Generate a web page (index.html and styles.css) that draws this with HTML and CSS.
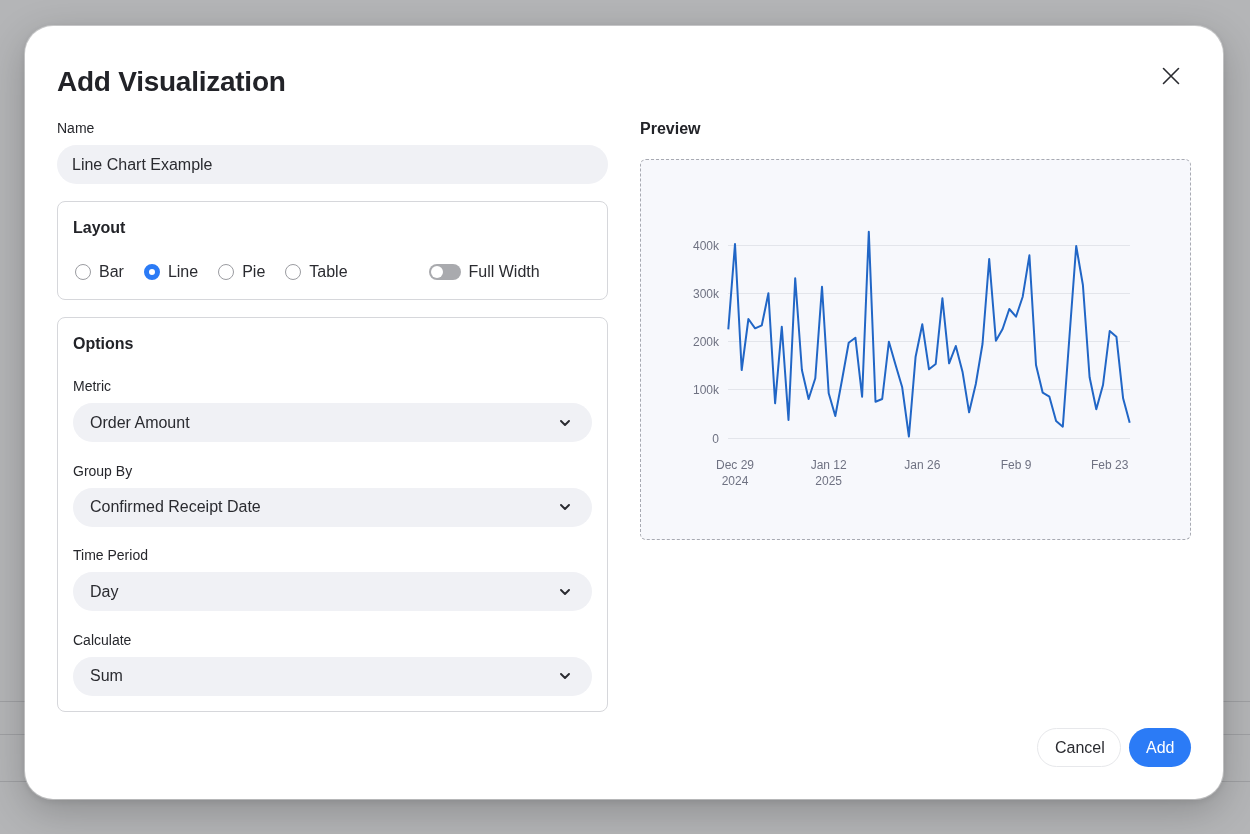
FILE: index.html
```html
<!DOCTYPE html>
<html lang="en">
<head>
<meta charset="utf-8">
<title>Add Visualization</title>
<link rel="stylesheet" href="styles.css">
</head>
<body>
<div class="page">
  <div class="page-row"></div>
  <div class="page-row"></div>
  <div class="page-row"></div>
</div>
<div class="backdrop">
  <div class="modal">
    <div class="modal-header">
      <h1 class="modal-title">Add Visualization</h1>
      <button class="close-btn" aria-label="Close">
        <svg width="18" height="18" viewBox="0 0 18 18"><path d="M1.5 1.5 L16.5 16.5 M16.5 1.5 L1.5 16.5" stroke="#2a2b30" stroke-width="1.6" fill="none" stroke-linecap="round"/></svg>
      </button>
    </div>
    <div class="modal-body">
      <div class="col">
        <label class="field-label">Name</label>
        <div class="text-input">Line Chart Example</div>

        <div class="panel layout-panel">
          <div class="panel-title">Layout</div>
          <div class="radio-row">
            <div class="radio-item"><span class="radio"></span><span>Bar</span></div>
            <div class="radio-item"><span class="radio checked"></span><span>Line</span></div>
            <div class="radio-item"><span class="radio"></span><span>Pie</span></div>
            <div class="radio-item"><span class="radio"></span><span>Table</span></div>
            <div class="radio-item toggle-item"><span class="toggle"><span class="knob"></span></span><span>Full Width</span></div>
          </div>
        </div>

        <div class="panel options-panel">
          <div class="panel-title">Options</div>
          <div class="fields">
            <div class="field">
              <label class="field-label">Metric</label>
              <div class="select"><span>Order Amount</span><svg class="chev" width="10" height="6" viewBox="0 0 10 6"><path d="M1 1 L5 5 L9 1" stroke="#2a2b30" stroke-width="1.9" fill="none" stroke-linecap="round" stroke-linejoin="round"/></svg></div>
            </div>
            <div class="field">
              <label class="field-label">Group By</label>
              <div class="select"><span>Confirmed Receipt Date</span><svg class="chev" width="10" height="6" viewBox="0 0 10 6"><path d="M1 1 L5 5 L9 1" stroke="#2a2b30" stroke-width="1.9" fill="none" stroke-linecap="round" stroke-linejoin="round"/></svg></div>
            </div>
            <div class="field">
              <label class="field-label">Time Period</label>
              <div class="select"><span>Day</span><svg class="chev" width="10" height="6" viewBox="0 0 10 6"><path d="M1 1 L5 5 L9 1" stroke="#2a2b30" stroke-width="1.9" fill="none" stroke-linecap="round" stroke-linejoin="round"/></svg></div>
            </div>
            <div class="field">
              <label class="field-label">Calculate</label>
              <div class="select"><span>Sum</span><svg class="chev" width="10" height="6" viewBox="0 0 10 6"><path d="M1 1 L5 5 L9 1" stroke="#2a2b30" stroke-width="1.9" fill="none" stroke-linecap="round" stroke-linejoin="round"/></svg></div>
            </div>
          </div>
        </div>
      </div>

      <div class="col">
        <div class="preview-title">Preview</div>
        <div class="chart-box">
          <svg class="chart" width="549" height="379" viewBox="641 160 549 379">
            <g stroke="#e3e5eb" stroke-width="1">
              <line x1="728" y1="245.5" x2="1130" y2="245.5"/>
              <line x1="728" y1="293.5" x2="1130" y2="293.5"/>
              <line x1="728" y1="341.5" x2="1130" y2="341.5"/>
              <line x1="728" y1="389.5" x2="1130" y2="389.5"/>
              <line x1="728" y1="438.5" x2="1130" y2="438.5"/>
            </g>
            <g class="axis-text" text-anchor="end">
              <text x="719" y="249.5">400k</text>
              <text x="719" y="297.5">300k</text>
              <text x="719" y="345.5">200k</text>
              <text x="719" y="393.5">100k</text>
              <text x="719" y="442.5">0</text>
            </g>
            <g class="axis-text" text-anchor="middle">
              <text x="735" y="469">Dec 29</text>
              <text x="735" y="485">2024</text>
              <text x="828.7" y="469">Jan 12</text>
              <text x="828.7" y="485">2025</text>
              <text x="922.3" y="469">Jan 26</text>
              <text x="1016" y="469">Feb 9</text>
              <text x="1109.7" y="469">Feb 23</text>
            </g>
            <polyline fill="none" stroke="#2166c6" stroke-width="2" stroke-linejoin="round" points="728.3,329.3 735,244 741.7,370 748.4,319 755.1,328.3 761.8,325.3 768.4,293.3 775.1,403.3 781.8,326.7 788.5,420 795.2,278.3 801.9,370 808.6,399 815.3,378.3 822,286.7 828.7,393.3 835.3,416 842,380 848.7,342.7 855.4,337.7 862.1,396.7 868.8,231.7 875.5,401.7 882.2,399 888.9,341.7 895.6,365 902.2,387.3 908.9,436.5 915.6,356.7 922.3,324.3 929,369.3 935.7,364 942.4,298.3 949.1,363.3 955.8,346 962.5,371.7 969.1,412.3 975.8,384 982.5,344 989.2,259 995.9,340.7 1002.6,329 1009.3,309 1016,316.7 1022.7,296.7 1029.4,255.3 1036,365 1042.7,392.7 1049.4,396.7 1056.1,421 1062.8,426.7 1069.5,336 1076.2,246 1082.9,285 1089.6,377.3 1096.3,409.3 1103,385 1109.7,331 1116.4,336.7 1123.1,398.3 1129.7,422.7"/>
          </svg>
        </div>
      </div>
    </div>
    <div class="modal-footer">
      <button class="btn btn-cancel">Cancel</button>
      <button class="btn btn-add">Add</button>
    </div>
  </div>
</div>
</body>
</html>
```

FILE: styles.css
```css
* { box-sizing: border-box; }
html, body {
  margin: 0;
  padding: 0;
  width: 1250px;
  height: 834px;
  overflow: hidden;
}
body {
  font-family: "Liberation Sans", Arial, Helvetica, sans-serif;
  color: #25262b;
  background: #b4b5b7;
}
.page {
  padding-top: 701px;
}
.page-row {
  border-top: 1px solid #9fa0a3;
  height: 33px;
}
.page-row:nth-child(3) {
  margin-top: 14px;
}
.backdrop {
  position: fixed;
  inset: 0;
  padding: 26px 27px 35px 25px;
  display: flex;
}
.modal {
  flex: 1;
  background: #ffffff;
  border-radius: 28px;
  box-shadow: 0 0 0 1px rgba(255,255,255,0.35), 0 12px 40px rgba(0,0,0,0.22), 0 2px 8px rgba(0,0,0,0.10);
  padding: 32px;
  display: flex;
  flex-direction: column;
}
.modal-header {
  display: flex;
  justify-content: space-between;
  align-items: flex-start;
  height: 48px;
  margin-bottom: 14px;
}
.modal-title {
  margin: 0;
  font-size: 28px;
  line-height: 48px;
  font-weight: 700;
  letter-spacing: -0.25px;
  color: #222328;
}
.close-btn {
  width: 40px;
  height: 40px;
  margin-top: -2px;
  border: 0;
  background: transparent;
  padding: 0;
  display: flex;
  align-items: center;
  justify-content: center;
}
.modal-body {
  display: grid;
  grid-template-columns: 551px 551px;
  column-gap: 32px;
}
.col {
  display: flex;
  flex-direction: column;
}
.field-label {
  display: block;
  font-size: 14px;
  line-height: 17px;
  color: #26272c;
  margin-bottom: 8px;
}
.text-input {
  height: 39px;
  border-radius: 20px;
  background: #f0f1f5;
  padding: 0 15px;
  display: flex;
  align-items: center;
  font-size: 16px;
  color: #2a2b30;
  margin-bottom: 17px;
}
.panel {
  border: 1px solid #d6d7db;
  border-radius: 8px;
  padding: 16px 15px;
}
.layout-panel {
  padding-bottom: 17px;
  margin-bottom: 17px;
}
.panel-title {
  font-size: 16px;
  font-weight: 700;
  line-height: 20px;
  color: #222328;
}
.radio-row {
  margin-top: 24px;
  display: flex;
  align-items: center;
  gap: 20px;
  height: 20px;
  font-size: 16px;
  color: #2a2b30;
  padding-left: 2px;
}
.radio-item {
  display: flex;
  align-items: center;
  gap: 8px;
}
.radio {
  width: 16px;
  height: 16px;
  border-radius: 50%;
  border: 1px solid #9b9ca1;
  background: #fff;
  display: inline-block;
}
.radio.checked {
  border: 5px solid #2b7bf6;
  background: #fff;
}
.toggle-item {
  margin-left: 61px;
}
.toggle {
  width: 32px;
  height: 16px;
  border-radius: 8px;
  background: #a9aaae;
  display: flex;
  align-items: center;
  padding: 0 2px;
}
.knob {
  width: 12px;
  height: 12px;
  border-radius: 50%;
  background: #fff;
}
.options-panel {
  padding-bottom: 15px;
}
.options-panel .panel-title {
  margin-bottom: 24px;
}
.fields {
  display: flex;
  flex-direction: column;
  gap: 20.5px;
}
.select {
  height: 39px;
  border-radius: 20px;
  background: #f0f1f5;
  padding: 0 22px 0 17px;
  display: flex;
  align-items: center;
  justify-content: space-between;
  font-size: 16px;
  color: #2a2b30;
}
.preview-title {
  font-size: 16px;
  font-weight: 700;
  line-height: 18px;
  color: #222328;
  margin-bottom: 21px;
}
.chart-box {
  height: 381px;
  border: 1px dashed #a8aab2;
  border-radius: 6px;
  background: #f7f8fc;
}
.chart {
  display: block;
}
.axis-text {
  font-family: "Liberation Sans", Arial, sans-serif;
  font-size: 12px;
  fill: #6f7282;
}
.modal-footer {
  margin-top: auto;
  display: flex;
  justify-content: flex-end;
  gap: 8px;
}
.btn {
  height: 39px;
  border-radius: 20px;
  font-family: "Liberation Sans", Arial, sans-serif;
  font-size: 16px;
  padding: 0 17px;
}
.btn-cancel {
  width: 84px;
  background: #fff;
  border: 1px solid #e7e8eb;
  color: #2a2b30;
}
.btn-add {
  width: 62px;
  background: #2b7bf6;
  border: 0;
  color: #fff;
}
```
